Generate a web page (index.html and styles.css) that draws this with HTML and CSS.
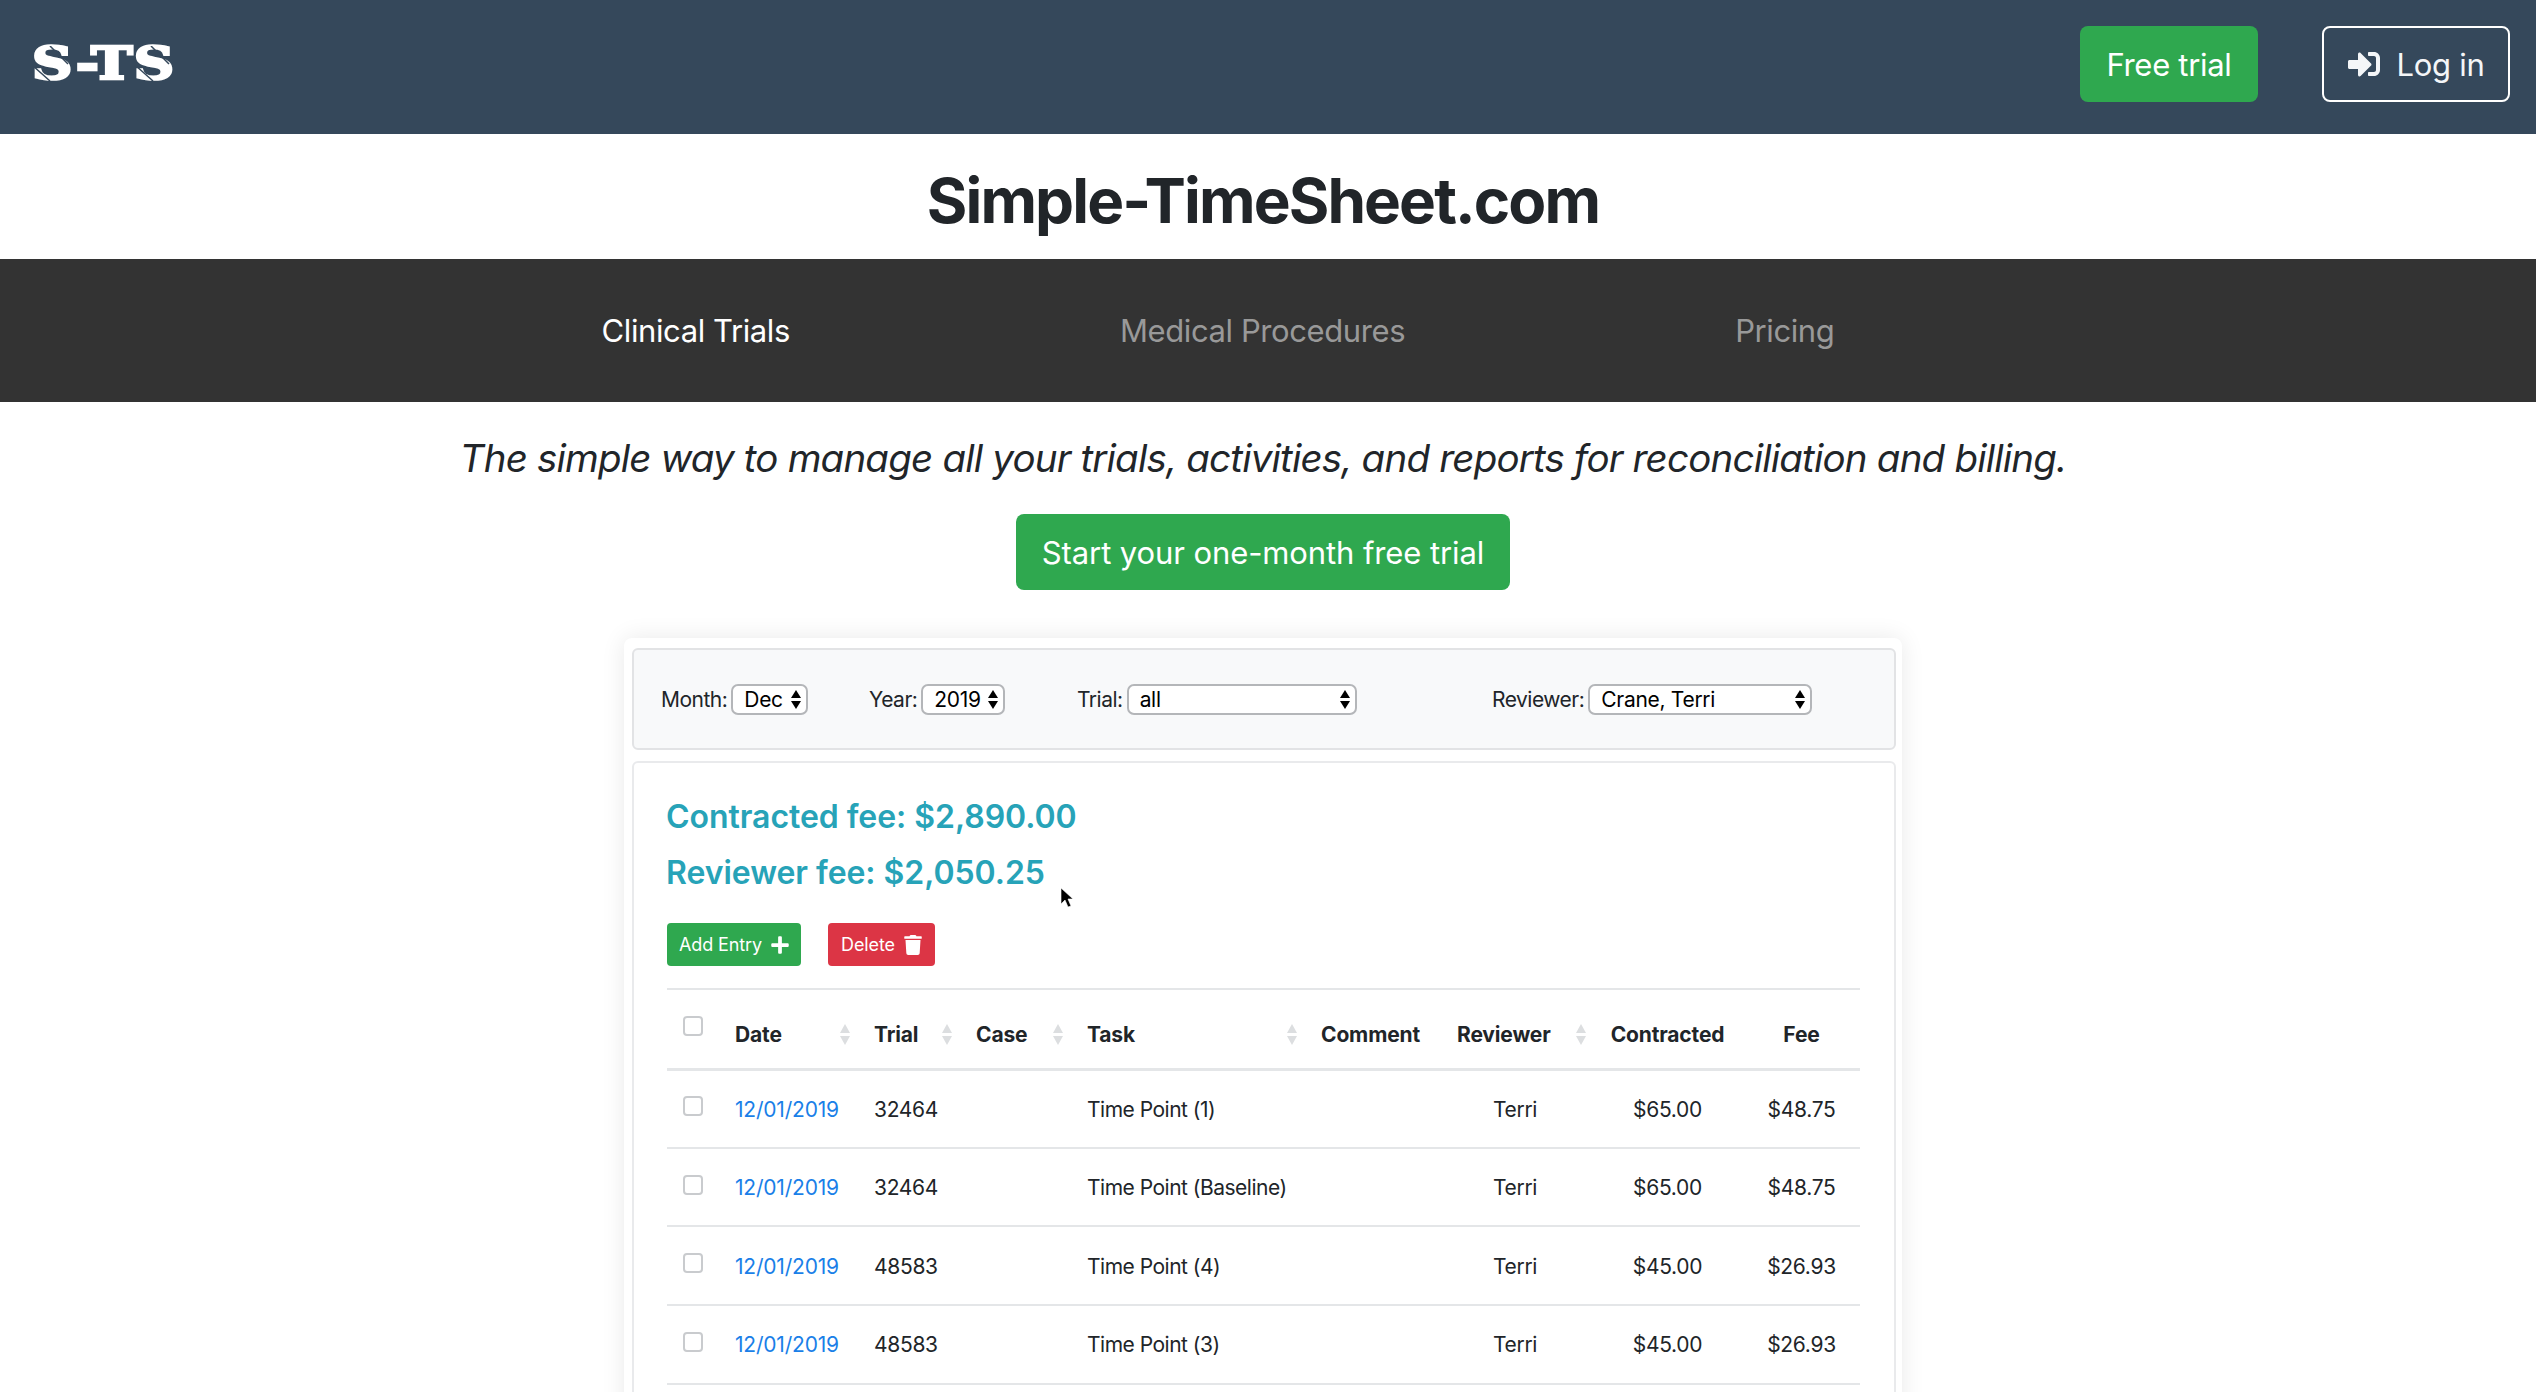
FILE: index.html
```html
<!DOCTYPE html>
<html lang="en">
<head>
    <meta charset="UTF-8">
    <title>Simple-TimeSheet.com</title>
    <link rel="stylesheet" href="styles.css">
</head>
<body>
    <header class="topbar">
        <a class="logo" href="#">
            <span class="logo-text">S-TS</span>
            <!-- the thin diagonal cuts through the two S letters -->
            <svg class="logo-cuts" viewBox="0 0 140 36">
                <path d="M0 19l18 16M18 0l18 18M103 19l18 16M119 0l18 18"/>
            </svg>
        </a>
        <div class="topbar-actions">
            <a class="btn btn-free" href="#">Free trial</a>
            <a class="btn btn-login" href="#">
                <svg class="login-icon" viewBox="0 0 512 512"><path d="M416 448h-84c-6.6 0-12-5.4-12-12v-40c0-6.6 5.4-12 12-12h84c17.7 0 32-14.3 32-32V160c0-17.7-14.3-32-32-32h-84c-6.6 0-12-5.4-12-12V76c0-6.6 5.4-12 12-12h84c53 0 96 43 96 96v192c0 53-43 96-96 96zm-47-201L201 79c-15-15-41-4.5-41 17v96H24c-13.3 0-24 10.7-24 24v96c0 13.3 10.7 24 24 24h136v96c0 21.5 26 32 41 17l168-168c9.3-9.4 9.3-24.6 0-34z"/></svg>
                Log in
            </a>
        </div>
    </header>

    <h1 class="site-title">Simple-TimeSheet.com</h1>

    <nav class="mainnav">
        <a class="active" href="#">Clinical Trials</a>
        <a href="#">Medical Procedures</a>
        <a href="#">Pricing</a>
    </nav>

    <p class="tagline">The simple way to manage all your trials, activities, and reports for reconciliation and billing.</p>

    <div class="cta-row">
        <a class="btn btn-cta" href="#">Start your one-month free trial</a>
    </div>

    <section class="demo">
        <form class="filters">
            <label class="filter">Month:
                <span class="select select-month"><select><option>Dec</option></select></span>
            </label>
            <label class="filter">Year:
                <span class="select select-year"><select><option>2019</option></select></span>
            </label>
            <label class="filter">Trial:
                <span class="select select-trial"><select><option>all</option></select></span>
            </label>
            <label class="filter">Reviewer:
                <span class="select select-reviewer"><select><option>Crane, Terri</option></select></span>
            </label>
        </form>

        <div class="results">
            <h5 class="fee">Contracted fee: $2,890.00</h5>
            <h5 class="fee">Reviewer fee: $2,050.25</h5>

            <div class="actions">
                <button class="btn-sm btn-add" type="button">Add Entry
                    <svg class="sm-icon" viewBox="0 0 448 512"><path d="M416 208H272V64c0-17.67-14.33-32-32-32h-32c-17.67 0-32 14.33-32 32v144H32c-17.67 0-32 14.33-32 32v32c0 17.67 14.33 32 32 32h144v144c0 17.67 14.33 32 32 32h32c17.67 0 32-14.33 32-32V304h144c17.67 0 32-14.33 32-32v-32c0-17.67-14.33-32-32-32z"/></svg>
                </button>
                <button class="btn-sm btn-delete" type="button">Delete
                    <svg class="sm-icon" viewBox="0 0 448 512"><path d="M432 32H312l-9.4-18.7A24 24 0 0 0 281.1 0H166.8a23.72 23.72 0 0 0-21.4 13.3L136 32H16A16 16 0 0 0 0 48v32a16 16 0 0 0 16 16h416a16 16 0 0 0 16-16V48a16 16 0 0 0-16-16zM53.2 467a48 48 0 0 0 47.9 45h245.8a48 48 0 0 0 47.9-45L416 128H32z"/></svg>
                </button>
            </div>

            <!-- mouse pointer caught in the screenshot -->
            <svg class="cursor" viewBox="0 0 14 22"><path d="M1 1v16l4-4 3 7 3-1-3-7h5z" fill="#000" stroke="#fff" stroke-width="0.6"/></svg>

            <table class="entries">
                <colgroup>
                    <col class="col-check">
                    <col class="col-date">
                    <col class="col-trial">
                    <col class="col-case">
                    <col class="col-task">
                    <col class="col-comment">
                    <col class="col-reviewer">
                    <col class="col-contracted">
                    <col class="col-fee">
                </colgroup>
                <thead>
                    <tr>
                        <th><input class="check" type="checkbox"></th>
                        <th class="sortable">Date</th>
                        <th class="sortable">Trial</th>
                        <th class="sortable">Case</th>
                        <th class="sortable">Task</th>
                        <th>Comment</th>
                        <th class="sortable">Reviewer</th>
                        <th class="center">Contracted</th>
                        <th class="center fee-cell">Fee</th>
                    </tr>
                </thead>
                <tbody>
                    <tr>
                        <td><input class="check" type="checkbox"></td>
                        <td><a href="#">12/01/2019</a></td>
                        <td>32464</td>
                        <td></td>
                        <td class="task-cell">Time Point (1)</td>
                        <td></td>
                        <td class="center reviewer-cell">Terri</td>
                        <td class="center">$65.00</td>
                        <td class="center fee-cell">$48.75</td>
                    </tr>
                    <tr>
                        <td><input class="check" type="checkbox"></td>
                        <td><a href="#">12/01/2019</a></td>
                        <td>32464</td>
                        <td></td>
                        <td class="task-cell">Time Point (Baseline)</td>
                        <td></td>
                        <td class="center reviewer-cell">Terri</td>
                        <td class="center">$65.00</td>
                        <td class="center fee-cell">$48.75</td>
                    </tr>
                    <tr>
                        <td><input class="check" type="checkbox"></td>
                        <td><a href="#">12/01/2019</a></td>
                        <td>48583</td>
                        <td></td>
                        <td class="task-cell">Time Point (4)</td>
                        <td></td>
                        <td class="center reviewer-cell">Terri</td>
                        <td class="center">$45.00</td>
                        <td class="center fee-cell">$26.93</td>
                    </tr>
                    <tr>
                        <td><input class="check" type="checkbox"></td>
                        <td><a href="#">12/01/2019</a></td>
                        <td>48583</td>
                        <td></td>
                        <td class="task-cell">Time Point (3)</td>
                        <td></td>
                        <td class="center reviewer-cell">Terri</td>
                        <td class="center">$45.00</td>
                        <td class="center fee-cell">$26.93</td>
                    </tr>
                </tbody>
            </table>
        </div>
    </section>
</body>
</html>
```

FILE: styles.css
```css
:root {
    --bar: #35485b;
    --green: #2fa84f;
    --red: #dc3545;
    --teal: #27a3b8;
    --link: #1a7fe8;
    --text: #212529;
    --line: #e4e6e8;
}

* {
    margin: 0;
    padding: 0;
    box-sizing: border-box;
}

html, body {
    height: 100vh;
    overflow: hidden;
}

body {
    background-color: #fff;
    color: var(--text);
    font-family: Inter, 'Liberation Sans', sans-serif;
}

a {
    text-decoration: none;
}

/* Top bar */
.topbar {
    display: flex;
    align-items: center;
    justify-content: space-between;
    height: 134px;
    padding: 0 26px 6px 32px;
    background-color: var(--bar);
}

.logo {
    position: relative;
    display: block;
    width: 140px;
    height: 36px;
    color: #fff;
}

.logo-text {
    display: block;
    font-family: 'DejaVu Serif', serif;
    font-size: 44px;
    font-weight: bold;
    letter-spacing: 1px;
    line-height: 36px;
    -webkit-text-stroke: 2.5px #fff;
    transform: scaleX(1.27);
    transform-origin: left center;
}

.logo-cuts {
    position: absolute;
    left: 0;
    top: 0;
    width: 140px;
    height: 36px;
    fill: none;
    stroke: var(--bar);
    stroke-width: 1.5;
}

.topbar-actions {
    display: flex;
    gap: 64px;
}

.btn {
    display: flex;
    align-items: center;
    justify-content: center;
    height: 76px;
    border-radius: 8px;
    color: #fff;
    font-size: 31px;
    letter-spacing: -0.3px;
}

.btn-free {
    width: 178px;
    background-color: var(--green);
}

.btn-login {
    width: 188px;
    gap: 17px;
    border: 2px solid #fff;
    color: #f4f6f8;
}

.login-icon {
    width: 32px;
    height: 32px;
    fill: #f4f6f8;
}

/* Title and nav */
.site-title {
    height: 125px;
    padding-right: 10px;
    font-size: 62px;
    font-weight: 700;
    letter-spacing: -1.9px;
    line-height: 134px;
    text-align: center;
}

.mainnav {
    display: flex;
    align-items: center;
    justify-content: center;
    gap: 330px;
    height: 143px;
    padding-right: 100px;
    background-color: #333;
}

.mainnav a {
    color: #999;
    font-size: 31px;
    letter-spacing: -0.4px;
}

.mainnav a.active {
    color: #fff;
}

.tagline {
    margin-top: 30px;
    padding-right: 10px;
    font-size: 38.5px;
    font-style: italic;
    letter-spacing: -0.8px;
    line-height: 52px;
    text-align: center;
}

.cta-row {
    display: flex;
    justify-content: center;
    margin-top: 30px;
    padding-right: 10px;
}

.btn-cta {
    width: 494px;
    background-color: var(--green);
    letter-spacing: -0.1px;
}

/* Demo card */
.demo {
    width: 1278px;
    height: 900px;
    margin: 48px auto 0 624px;
    padding: 10px 6px 10px 8px;
    border-radius: 8px;
    background-color: #fff;
    box-shadow: 0 0 24px rgba(0, 0, 0, 0.09);
}

.filters {
    display: grid;
    grid-template-columns: 208px 208px 415px auto;
    align-items: center;
    height: 102px;
    padding: 1px 0 0 27px;
    margin-bottom: 11px;
    border: 2px solid #e2e3e5;
    border-radius: 6px;
    background-color: #f8f9fa;
}

.filter {
    display: flex;
    align-items: center;
    gap: 4px;
    font-size: 21px;
    letter-spacing: -0.5px;
}

.select {
    position: relative;
    display: block;
    height: 31px;
}

.select select {
    width: 100%;
    height: 100%;
    padding-left: 11px;
    border: 2px solid #b4b6b9;
    border-radius: 7px;
    background-color: #fff;
    color: #000;
    font-family: inherit;
    font-size: 21px;
    letter-spacing: -0.3px;
    appearance: none;
}

/* up and down arrows of the select */
.select::before, .select::after {
    content: '';
    position: absolute;
    right: 7px;
    border-left: 5px solid transparent;
    border-right: 5px solid transparent;
}

.select::before {
    top: 6px;
    border-bottom: 8px solid #000;
}

.select::after {
    bottom: 6px;
    border-top: 8px solid #000;
}

.select-month { width: 77px; }
.select-year { width: 84px; }
.select-trial { width: 230px; }
.select-reviewer { width: 224px; }

.results {
    position: relative;
    height: 700px;
    padding: 26px 36px 0 33px;
    border: 2px solid #e9eaec;
    border-radius: 6px;
}

.fee {
    margin-left: -1px;
    color: var(--teal);
    font-size: 32px;
    font-weight: 600;
    letter-spacing: -0.05px;
    line-height: 56px;
}

.actions {
    display: flex;
    gap: 27px;
    margin-top: 22px;
    margin-bottom: 22px;
}

.btn-sm {
    display: flex;
    align-items: center;
    justify-content: center;
    gap: 9px;
    height: 43px;
    border: none;
    border-radius: 4px;
    color: #fff;
    font-family: inherit;
    font-size: 18px;
    letter-spacing: -0.1px;
}

.btn-add {
    width: 134px;
    background-color: var(--green);
}

.btn-delete {
    width: 107px;
    background-color: var(--red);
}

.sm-icon {
    width: 18px;
    height: 20px;
    fill: #fff;
}

.cursor {
    position: absolute;
    left: 426px;
    top: 124px;
    width: 14px;
    height: 22px;
}

/* Entries table */
.entries {
    width: 100%;
    border-collapse: collapse;
    table-layout: fixed;
    font-size: 21px;
    letter-spacing: -0.3px;
}

.col-check { width: 44px; }
.col-date { width: 139px; }
.col-trial { width: 102px; }
.col-case { width: 111px; }
.col-task { width: 234px; }
.col-comment { width: 136px; }
.col-reviewer { width: 153px; }
.col-contracted { width: 163px; }
.col-fee { width: 111px; }

.entries th {
    position: relative;
    height: 80px;
    padding: 0 0 17px 24px;
    border-top: 2px solid var(--line);
    border-bottom: 3px solid var(--line);
    font-weight: 700;
    letter-spacing: -0.15px;
    line-height: 33px;
    text-align: left;
    vertical-align: bottom;
}

.entries td {
    height: 78.7px;
    padding: 1px 0 0 24px;
    border-bottom: 2px solid var(--line);
    white-space: nowrap;
}

.entries th:first-child, .entries td:first-child {
    padding: 0;
    vertical-align: middle;
}

.entries a {
    color: var(--link);
    letter-spacing: -0.2px;
}

.entries .task-cell {
    letter-spacing: -0.5px;
}

.entries .center {
    padding-right: 24px;
    text-align: center;
}

.entries .fee-cell {
    padding-left: 14px;
    padding-right: 20px;
}

.entries .reviewer-cell {
    padding-left: 35px;
}

/* pale sort arrows at the right of a column head */
.sortable::before, .sortable::after {
    content: '';
    position: absolute;
    right: 0;
    border-left: 5.5px solid transparent;
    border-right: 5.5px solid transparent;
}

.sortable::before {
    top: 34px;
    border-bottom: 9px solid #dcdee0;
}

.sortable::after {
    top: 46px;
    border-top: 9px solid #dcdee0;
}

.check {
    display: block;
    width: 20px;
    height: 20px;
    margin: 0 0 5px 16px;
    border: 2px solid #c9cbce;
    border-radius: 4px;
    background-color: #fff;
    appearance: none;
}
```
